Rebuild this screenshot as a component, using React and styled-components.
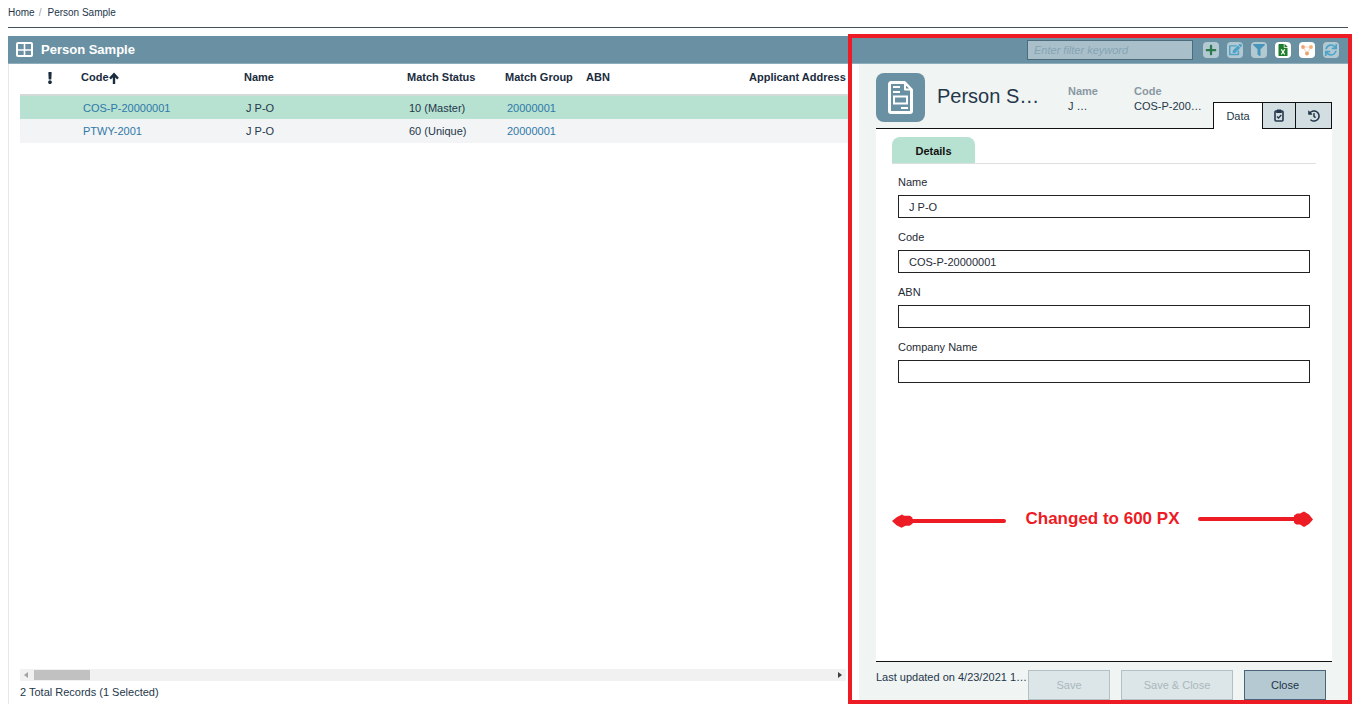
import React from "react";
import styled, { createGlobalStyle } from "styled-components";
import {
  FaPlus,
  FaEdit,
  FaFilter,
  FaFileExcel,
  FaSync,
  FaHistory,
  FaExclamation,
} from "react-icons/fa";

const GlobalStyle = createGlobalStyle`
  *, *::before, *::after { box-sizing: border-box; }
  body {
    margin: 0;
    background: #fff;
    color: #24374a;
    font-family: "Liberation Sans", Arial, sans-serif;
    font-size: 11px;
    line-height: 16px;
  }
  button, input { font: inherit; color: inherit; }
`;

const Page = styled.div`
  display: flex;
  flex-direction: column;
  min-height: 100vh;
  padding: 0 14px 10px 8px;
`;

const Breadcrumb = styled.nav`
  display: flex;
  align-items: center;
  gap: 4px;
  height: 28px;
  margin-bottom: 8px;
  padding-bottom: 2px;
  border-bottom: 1px solid #45525c;
  font-size: 10px;
  a { color: inherit; text-decoration: none; }
  i { color: #9aa3a9; font-style: normal; margin-right: 2px; }
`;

const Workspace = styled.main`
  position: relative;
  flex: 1;
  display: flex;
  flex-direction: column;
`;

const TitleBar = styled.header`
  display: flex;
  align-items: center;
  height: 28px;
  padding: 0 9px 0 8px;
  background: #6a91a3;
  border-bottom: 1px solid #8fadba;
  color: #fff;
`;

const Title = styled.h1`
  flex: 1;
  margin: 0 0 0 8px;
  font-size: 13px;
  font-weight: bold;
`;

const FilterInput = styled.input`
  width: 166px;
  height: 20px;
  margin-right: 10px;
  padding: 0 6px;
  background: #a9c0ca;
  border: 1px solid #4d6c7b;
  border-radius: 0;
  &::placeholder { color: #86a4b3; font-style: italic; opacity: 1; }
`;

const Tools = styled.div`
  display: flex;
  gap: 8px;
`;

const ToolButton = styled.button`
  display: flex;
  align-items: center;
  justify-content: center;
  width: 16px;
  height: 16px;
  padding: 0;
  border: 0;
  border-radius: 4px;
  background: ${(p) => (p.$solid ? "#fff" : "#b3c9d2")};
  color: ${(p) => p.$color};
`;

const Columns = styled.div`
  flex: 1;
  display: flex;
`;

const ListPane = styled.section`
  flex: 1;
  min-width: 0;
  display: flex;
  flex-direction: column;
  padding-left: 11px;
  border-left: 1px solid #e6e8e9;
  margin-right: 11px;
`;

const TableViewport = styled.div`
  flex: 1;
  overflow: hidden;
`;

const Table = styled.table`
  width: 100%;
  table-layout: fixed;
  border-collapse: collapse;
  white-space: nowrap;
  th {
    height: 31px;
    padding: 0 0 4px 3px;
    border-bottom: 2px solid #d3dad7;
    text-align: left;
    color: #1a2c3d;
  }
  th:first-child { padding: 0 0 4px 2px; text-align: center; }
  th svg { vertical-align: middle; }
  td { height: 24px; padding: 0 0 0 5px; }
  td a { color: #2f79a8; text-decoration: none; }
`;

const Row = styled.tr`
  background: ${(p) => (p.$selected ? "#b7e1d1" : "#f3f4f5")};
`;

const ScrollBar = styled.div`
  display: flex;
  align-items: center;
  height: 12px;
  margin-right: 2px;
  padding: 0 4px;
  background: #f1f1f1;
`;

const Thumb = styled.div`
  width: 56px;
  height: 10px;
  margin: 0 auto 0 6px;
  background: #c1c1c1;
`;

const Records = styled.p`
  margin: 3px 0 4px;
`;

const Panel = styled.aside`
  flex: 0 0 489px;
  min-width: 0;
  display: flex;
  flex-direction: column;
  padding: 0 16px 0 17px;
  background: #f0f4f3;
`;

const PanelHeader = styled.div`
  display: flex;
  height: 65px;
  padding-top: 9px;
`;

const Summary = styled.div`
  flex: 1;
  display: flex;
  border-bottom: 1px solid #111;
`;

const RecordIcon = styled.div`
  display: flex;
  align-items: center;
  justify-content: center;
  width: 49px;
  height: 49px;
  border-radius: 8px;
  background: #6a91a3;
`;

const RecordTitle = styled.h2`
  width: 131px;
  margin: 11px 0 0 12px;
  font-size: 20px;
  line-height: 24px;
  font-weight: normal;
  white-space: nowrap;
`;

const Fact = styled.dl`
  width: ${(p) => p.$width};
  margin: 11px 0 0;
  line-height: 15px;
  dt { color: #8a98a3; font-weight: bold; }
  dd { margin: 0; white-space: nowrap; }
`;

const Tabs = styled.div`
  align-self: flex-end;
  display: flex;
  height: 27px;
  border-right: 1px solid #111;
`;

const Tab = styled.button`
  display: flex;
  align-items: center;
  justify-content: center;
  width: ${(p) => p.$width};
  padding: 0;
  border: solid #111;
  border-width: 1px 0 ${(p) => (p.$active ? "0" : "1px")} 1px;
  background: ${(p) => (p.$active ? "#fff" : "#d3dee3")};
`;

const Card = styled.div`
  position: relative;
  flex: 1;
  padding: 8px 16px;
  background: #fff;
  border-bottom: 1px solid #111;
`;

const SubTabs = styled.div`
  border-bottom: 1px solid #dcdfe0;
`;

const SubTab = styled.button`
  display: block;
  width: 83px;
  height: 26px;
  padding: 2px 0 0;
  border: 0;
  border-radius: 8px 8px 0 0;
  background: #b7e1d1;
  color: #111;
  font-weight: bold;
`;

const Form = styled.form`
  display: flex;
  flex-direction: column;
  gap: 11px;
  padding: 10px 6px;
`;

const Field = styled.label`
  display: flex;
  flex-direction: column;
  gap: 5px;
  color: #1f2b36;
`;

const TextInput = styled.input`
  height: 23px;
  padding: 0 10px;
  border: 1px solid #222;
  border-radius: 0;
  background: #fff;
`;

const Footer = styled.footer`
  display: flex;
  height: 42px;
  padding: 8px 6px 0 0;
  gap: 11px;
`;

const Updated = styled.span`
  flex: 1;
  min-width: 0;
  margin-top: -1px;
  white-space: nowrap;
`;

const ActionButton = styled.button`
  flex: none;
  width: ${(p) => p.$width};
  height: 30px;
  padding: 0;
  border: 1px solid #4c647a;
  background: #b5c9d3;
  color: #1f3347;
  &:disabled {
    border-color: #b4c0c4;
    background: #dce5e8;
    color: #a9b8bd;
  }
`;

const HighlightFrame = styled.div`
  position: absolute;
  top: -2px;
  right: -4px;
  bottom: 0;
  width: 504px;
  border: 4px solid #ed1c24;
  pointer-events: none;
`;

const Callout = styled.div`
  position: absolute;
  top: 378px;
  left: 16px;
  right: 19px;
  display: flex;
  align-items: center;
  justify-content: space-between;
  color: #ed1c24;
  font-size: 17px;
  line-height: 24px;
  font-weight: bold;
`;

const GridIcon = () => (
  <svg width="17" height="15" viewBox="0 0 17 15" fill="none" stroke="#fff" strokeWidth="2">
    <rect x="1" y="1" width="15" height="13" rx="1" />
    <path d="M1 8h15M8.500 2v12" strokeWidth="1.600" />
  </svg>
);

const SortIcon = () => (
  <svg width="10" height="12" viewBox="0 0 10 12" fill="none" stroke="currentColor" strokeWidth="2.400">
    <path d="M5 12V2.500M1 6.600l4-4.400L9 6.600" />
  </svg>
);

const NodesIcon = () => (
  <svg width="14" height="14" viewBox="0 0 14 14">
    <path d="M3 4h8L7 10.500z" fill="none" stroke="#f3d3c4" strokeWidth="1" />
    <circle cx="3" cy="4" r="1.900" fill="#f2a179" />
    <circle cx="11" cy="4" r="1.900" fill="#f2b279" />
    <circle cx="7" cy="10.500" r="1.900" fill="#e8a06c" />
  </svg>
);

const DocumentIcon = () => (
  <svg width="25" height="33" viewBox="0 0 25 33" fill="none" stroke="#fff">
    <path d="M3 1.500h13.500l7 7.500v21a1.500 1.500 0 0 1-1.500 1.500H3A1.500 1.500 0 0 1 1.500 30V3A1.500 1.500 0 0 1 3 1.500z" strokeWidth="3" strokeLinejoin="round" />
    <path d="M17 2v6.500h6.500z" fill="#6a91a3" strokeWidth="2" strokeLinejoin="round" />
    <path d="M5 6h7M5 11h7" strokeWidth="2" />
    <rect x="6" y="15.500" width="13" height="7" strokeWidth="2" />
    <path d="M13 27h7" strokeWidth="2" />
  </svg>
);

const ClipboardIcon = () => (
  <svg width="10" height="13" viewBox="0 0 10 13" fill="none" stroke="currentColor">
    <rect x="1" y="2" width="8" height="10" rx="1" strokeWidth="1.600" />
    <path d="M3 0.500h4L8 4H2z" fill="currentColor" stroke="none" />
    <path d="M3 7.500l1.500 1.500L7.300 6" strokeWidth="1.300" />
  </svg>
);

const CaretIcon = ({ left }) => (
  <svg width="4" height="6" viewBox="0 0 4 6">
    <path d={left ? "M4 0v6L0 3z" : "M0 0v6l4-3z"} fill={left ? "#a3a3a3" : "#404040"} />
  </svg>
);

const ArrowLeft = () => (
  <svg width="115" height="20" viewBox="0 0 115 20" fill="#ed1c24">
    <path d="M0 12l5-4 5-2.500 2 1.300h6l2.500 2v6l-3 2h-4l-4 2-5-2.500z" />
    <path d="M18 12h94" stroke="#ed1c24" strokeWidth="4" strokeLinecap="round" />
  </svg>
);

const ArrowRight = () => (
  <svg width="115" height="20" viewBox="0 0 115 20" fill="#ed1c24">
    <path d="M115 10.500l-4 4.500-5 3-4-2.500h-4l-2-2v-7l3-2h3l4-2 5 3z" />
    <path d="M2 10h97" stroke="#ed1c24" strokeWidth="4" strokeLinecap="round" />
  </svg>
);

const rows = [
  { code: "COS-P-20000001", name: "J P-O", status: "10 (Master)", group: "20000001", selected: true },
  { code: "PTWY-2001", name: "J P-O", status: "60 (Unique)", group: "20000001" },
];

const columnWidths = [58, 163, 163, 98, 81, 163];

const fields = [
  ["Name", "J P-O"],
  ["Code", "COS-P-20000001"],
  ["ABN", ""],
  ["Company Name", ""],
];

export default function App() {
  return (
    <>
      <GlobalStyle />
      <Page>
        <Breadcrumb aria-label="Breadcrumb">
          <a href="#home">Home</a>
          <i>/</i>
          <span>Person Sample</span>
        </Breadcrumb>
        <Workspace>
          <TitleBar>
            <GridIcon />
            <Title>Person Sample</Title>
            <FilterInput aria-label="Filter" placeholder="Enter filter keyword" />
            <Tools>
              <ToolButton aria-label="Add" $color="#2c7a4b"><FaPlus size={12} /></ToolButton>
              <ToolButton aria-label="Edit" $color="#4ba3c9"><FaEdit size={13} /></ToolButton>
              <ToolButton aria-label="Filter rows" $color="#4795bb"><FaFilter size={12} /></ToolButton>
              <ToolButton aria-label="Export" $solid $color="#1e7d2c"><FaFileExcel size={12} /></ToolButton>
              <ToolButton aria-label="Relations" $solid><NodesIcon /></ToolButton>
              <ToolButton aria-label="Refresh" $color="#4ba3c9"><FaSync size={12} /></ToolButton>
            </Tools>
          </TitleBar>
          <Columns>
            <ListPane>
              <TableViewport>
                <Table>
                  <colgroup>
                    {columnWidths.map((w, i) => <col key={i} width={w} />)}
                    <col />
                  </colgroup>
                  <thead>
                    <tr>
                      <th aria-label="Priority"><FaExclamation size={12} /></th>
                      <th>Code<SortIcon /></th>
                      <th>Name</th>
                      <th>Match Status</th>
                      <th>Match Group</th>
                      <th>ABN</th>
                      <th>Applicant Address</th>
                    </tr>
                  </thead>
                  <tbody>
                    {rows.map((r) => (
                      <Row key={r.code} $selected={r.selected}>
                        <td />
                        <td><a href="#record">{r.code}</a></td>
                        <td>{r.name}</td>
                        <td>{r.status}</td>
                        <td><a href="#group">{r.group}</a></td>
                        <td />
                        <td />
                      </Row>
                    ))}
                  </tbody>
                </Table>
              </TableViewport>
              <ScrollBar>
                <CaretIcon left />
                <Thumb />
                <CaretIcon />
              </ScrollBar>
              <Records>2 Total Records (1 Selected)</Records>
            </ListPane>
            <Panel>
              <PanelHeader>
                <Summary>
                  <RecordIcon><DocumentIcon /></RecordIcon>
                  <RecordTitle>Person S…</RecordTitle>
                  <Fact $width="66px"><dt>Name</dt><dd>J …</dd></Fact>
                  <Fact $width="72px"><dt>Code</dt><dd>COS-P-200…</dd></Fact>
                </Summary>
                <Tabs>
                  <Tab $active $width="49px">Data</Tab>
                  <Tab $width="33px" aria-label="Tasks"><ClipboardIcon /></Tab>
                  <Tab $width="36px" aria-label="History"><FaHistory size={12} /></Tab>
                </Tabs>
              </PanelHeader>
              <Card>
                <SubTabs><SubTab>Details</SubTab></SubTabs>
                <Form>
                  {fields.map(([label, value]) => (
                    <Field key={label}>
                      {label}
                      <TextInput defaultValue={value} />
                    </Field>
                  ))}
                </Form>
                <Callout>
                  <ArrowLeft />
                  <span>Changed to 600 PX</span>
                  <ArrowRight />
                </Callout>
              </Card>
              <Footer>
                <Updated>Last updated on 4/23/2021 1…</Updated>
                <ActionButton disabled $width="82px">Save</ActionButton>
                <ActionButton disabled $width="112px">Save &amp; Close</ActionButton>
                <ActionButton $width="82px">Close</ActionButton>
              </Footer>
            </Panel>
          </Columns>
          <HighlightFrame />
        </Workspace>
      </Page>
    </>
  );
}
